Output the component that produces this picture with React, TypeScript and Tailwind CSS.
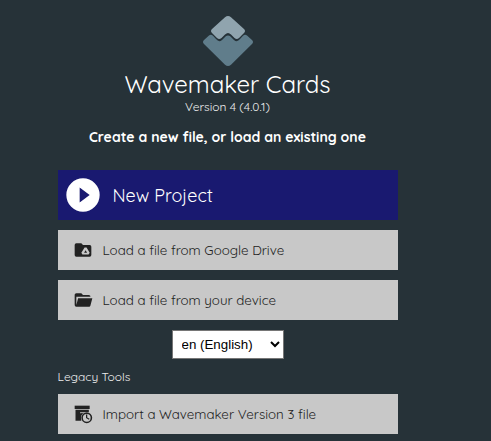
import type { ReactNode } from "react";

function Logo() {
  return (
    <svg width="50" height="50" viewBox="0 0 50 50" className="block">
      <path d="M22 1.2 Q25 -1.2 28 1.2 L41 13.1 Q43 15 41 16.9 L36 21.9 Q33.9 23.9 31.5 21.9 L28 18.4 Q25 15.4 22 18.4 L18.5 21.9 Q16.1 23.9 14 21.9 L9 16.9 Q7 15 9 13.1 Z" fill="#90a4ae" />
      <path d="M6 19.6 Q8 18 10 19.8 L13 23 Q16 26.8 19 23.9 L22.5 20.5 Q25 18.3 27.5 20.5 L31 23.9 Q34 26.8 37 23 L40 19.8 Q42 18 44 19.6 L49 24 Q51 26 49 28 L28 48.7 Q25 51.3 22 48.7 L1 28 Q-1 26 1 24 Z" fill="#607d8b" />
    </svg>
  );
}

function PlayIcon() {
  return (
    <svg width="40" height="40" viewBox="0 0 24 24" fill="white">
      <path d="M10 16.5v-9l6 4.5M12 2A10 10 0 0 0 2 12a10 10 0 0 0 10 10 10 10 0 0 0 10-10A10 10 0 0 0 12 2Z" />
    </svg>
  );
}

function DriveFolderIcon() {
  return (
    <svg width="20" height="20" viewBox="0 0 24 24" fill="#222">
      <path fillRule="evenodd" d="M20 6h-8l-2-2H4a2 2 0 0 0-2 2v12a2 2 0 0 0 2 2h16a2 2 0 0 0 2-2V8a2 2 0 0 0-2-2ZM13.9 9h2.4l3.7 6.3-1.3 2.2h-7.4L10 15.3 13.9 9Zm1.2 3.2-1.8 3h3.6l-1.8-3Z" />
    </svg>
  );
}

function OpenFolderIcon() {
  return (
    <svg width="20" height="20" viewBox="0 0 24 24" fill="#222">
      <path d="M19 20H4a2 2 0 0 1-2-2V6c0-1.11.89-2 2-2h6l2 2h7a2 2 0 0 1 2 2H4v10l2.14-8h17.07l-2.28 8.5c-.23.87-1.01 1.5-1.93 1.5Z" />
    </svg>
  );
}

function ArchiveClockIcon() {
  return (
    <svg width="20" height="20" viewBox="0 0 24 24" fill="#222">
      <path d="M2 2h18v4H2Z" />
      <path fillRule="evenodd" d="M3 7h16v3H8.5v1.2h4L10 13.5V20H3Z" />
      <path d="M10 11.2h4L10 15Z" />
      <circle cx="16.5" cy="16.5" r="7" fill="#c8c8c8" />
      <circle cx="16.5" cy="16.5" r="5.6" fill="none" stroke="#222" strokeWidth="1.9" />
      <path d="M15.6 12.5h1.5v3.6l2.8 1.6-.8 1.3-3.5-2.1Z" />
    </svg>
  );
}

function FileButton({ icon, children }: { icon: ReactNode; children: ReactNode }) {
  return (
    <button className="flex h-10 w-full items-center bg-[#c8c8c8] pl-[15px] text-left text-[#222]">
      {icon}
      <span className="ml-[10px] whitespace-nowrap text-[13.333px] leading-5">{children}</span>
    </button>
  );
}

export default function App() {
  return (
    <main className="h-[441px] w-[491px] overflow-hidden bg-[#263238] font-[Quicksand,Lato,sans-serif] text-white">
      <div className="ml-[57.5px] flex w-[340px] flex-col pt-4">
        <header className="flex flex-col items-center">
          <Logo />
          <h1 className="mt-0.5 whitespace-nowrap text-[24px] leading-8">Wavemaker Cards</h1>
          <p className="whitespace-nowrap text-[12px] leading-[14px] text-[#eee]">Version 4 (4.0.1)</p>
          <p className="mt-[13px] whitespace-nowrap text-[14px] font-bold leading-5">Create a new file, or load an existing one</p>
        </header>
        <button className="mt-[23px] flex h-[50px] items-center bg-[#191970] pl-[5px] text-left">
          <PlayIcon />
          <span className="ml-[10px] whitespace-nowrap text-[18px]">New Project</span>
        </button>
        <div className="mt-[10px] flex flex-col gap-[10px]">
          <FileButton icon={<DriveFolderIcon />}>Load a file from Google Drive</FileButton>
          <FileButton icon={<OpenFolderIcon />}>Load a file from your device</FileButton>
        </div>
        <select className="mt-[10px] h-[29px] w-[112px] self-center border border-[#767676] bg-white pl-[5px] font-['Liberation_Sans',sans-serif] text-[13.333px] text-black">
          <option>en (English)</option>
        </select>
        <p className="mt-[10px] text-[12px] leading-4 text-[#eee]">Legacy Tools</p>
        <div className="mt-[9px]">
          <FileButton icon={<ArchiveClockIcon />}>Import a Wavemaker Version 3 file</FileButton>
        </div>
      </div>
    </main>
  );
}
